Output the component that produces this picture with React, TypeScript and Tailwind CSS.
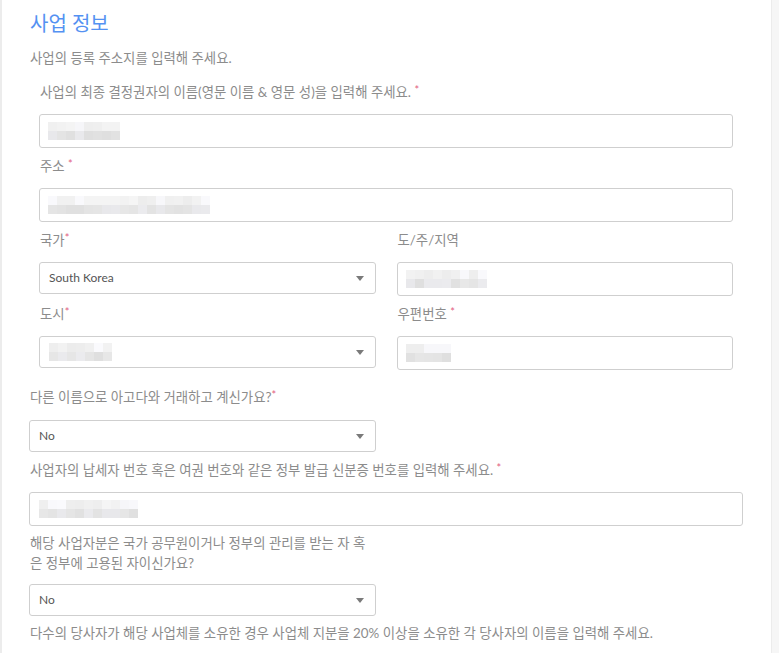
import React from 'react';

const font = "font-['Lato','Noto_Sans_CJK_KR',sans-serif]";

// blurred (pixelated) value placeholder
function Blur({ cells, seed }: { cells: number; seed: number }) {
  const shade = (i: number, row: number) => {
    const v = Math.abs(Math.sin((i + 1) * 12.9898 + seed * 78.233 + row * 3.1)) * 43758.5453;
    const f = v - Math.floor(v);
    const base = row === 0 ? 236 : 222;
    const c = Math.round(base + f * 14);
    return `rgb(${c},${c},${Math.min(255, c + (f > 0.7 ? 3 : 0))})`;
  };
  return (
    <div className="flex flex-col">
      {[0, 1].map((row) => (
        <div key={row} className="flex">
          {Array.from({ length: cells }).map((_, i) => (
            <div key={i} className="w-[9px] h-[9px]" style={{ background: shade(i, row) }} />
          ))}
        </div>
      ))}
    </div>
  );
}

function Star() {
  return <span className="text-[#e2607f] text-[11px] leading-[16px] align-top">*</span>;
}

function Label({ children, className = '' }: { children: React.ReactNode; className?: string }) {
  return <div className={`text-[13.4px] leading-[20px] text-[#8c8c8c] ${className}`}>{children}</div>;
}

function Input({ children, className = '' }: { children?: React.ReactNode; className?: string }) {
  return (
    <div className={`h-[34px] border border-[#cfcfcf] rounded-[3px] bg-white flex items-center pl-[8px] ${className}`}>
      {children}
    </div>
  );
}

function Select({ children, className = '' }: { children?: React.ReactNode; className?: string }) {
  return (
    <div className={`h-[32px] border border-[#cfcfcf] rounded-[3px] bg-white flex items-center justify-between pl-[9px] pr-[11px] ${className}`}>
      <div className="text-[12px] text-[#555]">{children}</div>
      <div className="w-0 h-0 border-l-[4px] border-r-[4px] border-t-[5px] border-l-transparent border-r-transparent border-t-[#7a7a7a]" />
    </div>
  );
}

export default function App() {
  return (
    <div className={`w-[779px] h-[653px] bg-white flex overflow-hidden ${font}`}>
      <div className="w-[2px] bg-[#ececec]" />
      <div className="flex-1 pl-[27px] pr-[28px] pt-[8px]">
        <h2 className="text-[20px] leading-[30px] text-[#5491f2] font-normal ml-[1px]">사업 정보</h2>
        <Label className="mt-[10px] ml-[1px]">사업의 등록 주소지를 입력해 주세요.</Label>

        <div className="mx-[10px]">
          <Label className="mt-[14px] mb-[12px] ml-[1px]">
            사업의 최종 결정권자의 이름(영문 이름 &amp; 영문 성)을 입력해 주세요. <Star />
          </Label>
          <Input>
            <Blur cells={8} seed={1} />
          </Input>

          <Label className="mt-[8px] mb-[12px] ml-[1px]">
            주소 <Star />
          </Label>
          <Input className="pl-[5px]">
            <Blur cells={18} seed={2} />
          </Input>

          <div className="grid grid-cols-2 gap-x-[21px]">
            <div>
              <Label className="mt-[8px] mb-[12px] ml-[1px]">
                국가<Star />
              </Label>
              <Select>South Korea</Select>
            </div>
            <div>
              <Label className="mt-[8px] mb-[12px] ml-[1px]">도/주/지역</Label>
              <Input>
                <Blur cells={9} seed={3} />
              </Input>
            </div>
            <div>
              <Label className="mt-[8px] mb-[12px] ml-[1px]">
                도시<Star />
              </Label>
              <Select>
                <Blur cells={7} seed={4} />
              </Select>
            </div>
            <div>
              <Label className="mt-[8px] mb-[12px] ml-[1px]">
                우편번호 <Star />
              </Label>
              <Input className="pl-[6px]">
                <Blur cells={5} seed={5} />
              </Input>
            </div>
          </div>
        </div>

        <Label className="mt-[17px] mb-[13px] ml-[1px]">
          다른 이름으로 아고다와 거래하고 계신가요?<Star />
        </Label>
        <Select className="w-[347px]">No</Select>

        <Label className="mt-[8px] mb-[12px] ml-[1px]">
          사업자의 납세자 번호 혹은 여권 번호와 같은 정부 발급 신분증 번호를 입력해 주세요. <Star />
        </Label>
        <Input className="pl-[9px]">
          <Blur cells={11} seed={6} />
        </Input>

        <Label className="mt-[7px] mb-[11px] ml-[1px] w-[342px] leading-[19px] break-all">
          해당 사업자분은 국가 공무원이거나 정부의 관리를 받는 자 혹은 정부에 고용된 자이신가요?
        </Label>
        <Select className="w-[347px]">No</Select>

        <Label className="mt-[7px] ml-[1px]">
          다수의 당사자가 해당 사업체를 소유한 경우 사업체 지분을 20% 이상을 소유한 각 당사자의 이름을 입력해 주세요.
        </Label>
      </div>
      <div className="w-[8px] bg-[#f6f6f6] border-l border-[#ececec]" />
    </div>
  );
}
